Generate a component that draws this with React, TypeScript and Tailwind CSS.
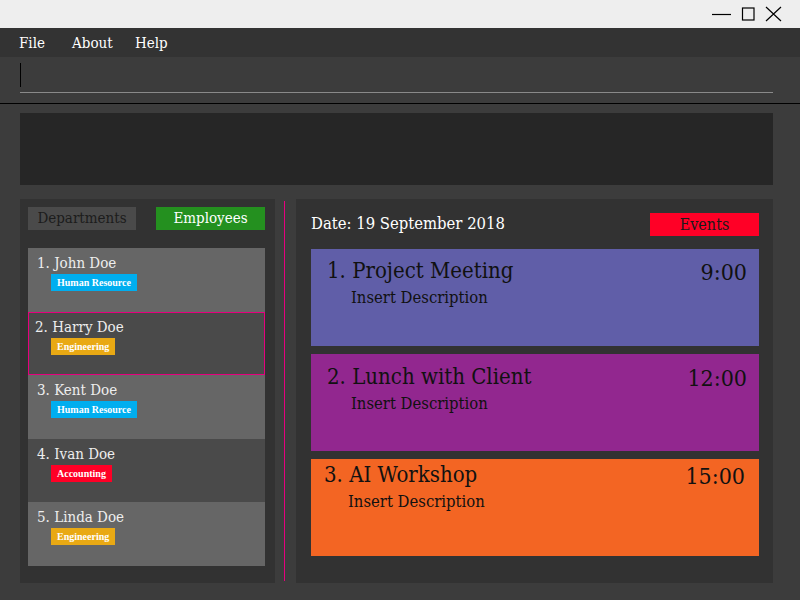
import React from 'react';

const serif = "font-['DejaVu_Serif',serif] font-stretch-condensed";
const badgeFont = "font-['Liberation_Serif',serif]";

const employees = [
  { name: 'John Doe', dept: 'Human Resource', tag: 'bg-[#00aeef]' },
  { name: 'Harry Doe', dept: 'Engineering', tag: 'bg-[#e9a914]' },
  { name: 'Kent Doe', dept: 'Human Resource', tag: 'bg-[#00aeef]' },
  { name: 'Ivan Doe', dept: 'Accounting', tag: 'bg-[#ff0026]' },
  { name: 'Linda Doe', dept: 'Engineering', tag: 'bg-[#e9a914]' },
];

const events = [
  { title: 'Project Meeting', time: '9:00', bg: 'bg-[#605ea8]', box: 'pl-[16px] pr-[12px] pt-[8px]' },
  { title: 'Lunch with Client', time: '12:00', bg: 'bg-[#92278f]', box: 'pl-[16px] pr-[12px] pt-[9px]' },
  { title: 'AI Workshop', time: '15:00', bg: 'bg-[#f36523]', box: 'pl-[13px] pr-[14px] pt-[2px]' },
];

export default function App() {
  return (
    <div className={`w-[800px] h-[600px] flex flex-col bg-[#3c3c3c] overflow-hidden ${serif}`}>
      {/* Window title bar */}
      <div className="h-[28px] bg-[#eeeeee] flex items-center justify-end pr-[18px] gap-[10px] shrink-0">
        <svg width="20" height="16" viewBox="0 0 20 16">
          <path d="M1 8.5h19" stroke="#000" strokeWidth="1.2" />
        </svg>
        <svg width="14" height="16" viewBox="0 0 14 16">
          <rect x="1.5" y="2" width="11.5" height="12" fill="none" stroke="#000" strokeWidth="1.2" />
        </svg>
        <svg width="17" height="16" viewBox="0 0 17 16">
          <path d="M1 1l15 14M16 1L1 15" stroke="#000" strokeWidth="1.2" />
        </svg>
      </div>

      {/* Menu bar */}
      <div className="h-[29px] bg-[#333333] flex items-center text-white text-[15px] pl-[19px] pt-[1px] shrink-0">
        <span className="w-[53px]">File</span>
        <span className="w-[63px]">About</span>
        <span>Help</span>
      </div>

      {/* Command box */}
      <div className="h-[46px] pl-[20px] pr-[27px] pt-[6px] shrink-0">
        <div className="h-[30px] border-b border-[#8a8a8a] flex items-start">
          <div className="w-[1px] h-[24px] bg-black" />
        </div>
      </div>
      <div className="h-[1px] bg-black shrink-0" />

      {/* Result display */}
      <div className="ml-[20px] mr-[27px] mt-[9px] h-[72px] bg-[#262626] shrink-0" />

      {/* Main area */}
      <div className="flex ml-[20px] mr-[27px] mt-[14px] h-[384px]">
        <div className="w-[255px] bg-[#323232] pl-[8px] pr-[10px] pt-[8px] flex flex-col">
          <div className="flex justify-between">
            <div className="w-[108px] h-[23px] bg-[#4a4a4a] text-[#1c1c1c] text-[15px] flex items-center justify-center">
              Departments
            </div>
            <div className="w-[109px] h-[23px] bg-[#24901f] text-white text-[15px] flex items-center justify-center">
              Employees
            </div>
          </div>
          <div className="mt-[18px] flex flex-col">
            {employees.map((e, i) => (
              <div
                key={e.name}
                className={`h-[63.6px] ${i % 2 === 0 ? 'bg-[#666666]' : 'bg-[#4a4a4a]'} ${
                  i === 1 ? 'border border-[#e6007e] pl-[6px] pt-[5px]' : 'pl-[9px] pt-[6px]'
                }`}
              >
                <div className="text-[#eeeeee] text-[15px] leading-[18px]">
                  {i + 1}. {e.name}
                </div>
                <div className={`${i === 1 ? 'pl-[16px]' : 'pl-[14px]'} mt-[2px] flex`}>
                  <span className={`${e.tag} ${badgeFont} text-white text-[10px] leading-[17px] px-[6px] font-bold`}>
                    {e.dept}
                  </span>
                </div>
              </div>
            ))}
          </div>
        </div>

        <div className="w-[1px] my-[2px] ml-[9px] bg-[#e6007e]" />

        <div className="flex-1 ml-[11px] bg-[#323232] px-[15px] pr-[14px] pt-[14px] flex flex-col">
          <div className="flex justify-between items-center h-[23px]">
            <span className="text-white text-[16.5px]">Date: 19 September 2018</span>
            <div className="w-[109px] h-[23px] bg-[#ff0026] text-[#1a1a1a] text-[16px] flex items-center justify-center">
              Events
            </div>
          </div>
          <div className="mt-[13px] flex flex-col gap-[8px]">
            {events.map((ev, i) => (
              <div key={ev.title} className={`h-[97px] ${ev.bg} text-[#111111] ${ev.box}`}>
                <div className="flex justify-between items-start">
                  <span className="text-[22px] leading-[28px]">
                    {i + 1}. {ev.title}
                  </span>
                  <span className="text-[23px] leading-[30px]">{ev.time}</span>
                </div>
                <div className="pl-[24px] text-[16.5px] leading-[22px]">Insert Description</div>
              </div>
            ))}
          </div>
        </div>
      </div>
    </div>
  );
}
